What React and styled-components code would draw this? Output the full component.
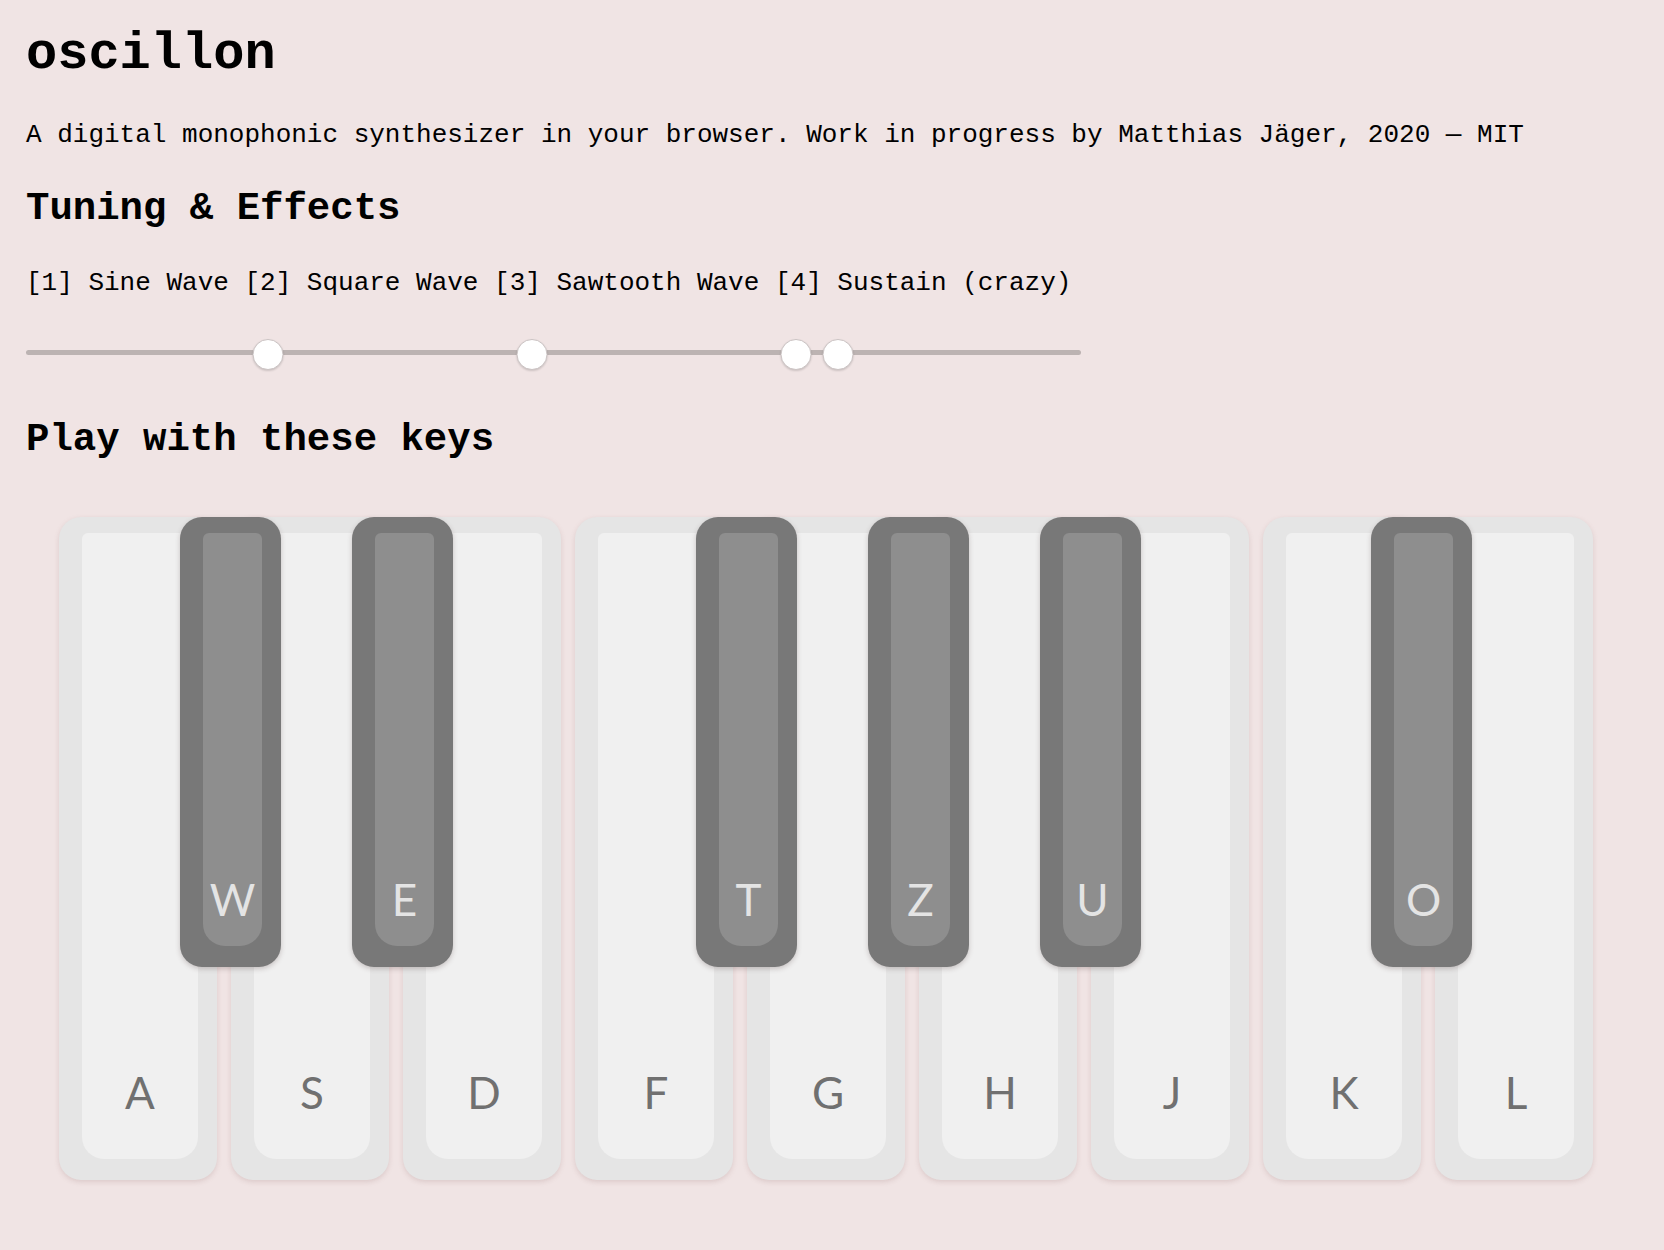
import React from "react";
import styled, { createGlobalStyle } from "styled-components";

const GlobalStyle = createGlobalStyle`
  html, body {
    margin: 0;
    padding: 0;
    background: #f0e4e4;
  }
  body {
    font-family: "Liberation Mono", "Courier New", monospace;
    font-size: 26px;
    color: #000;
  }
`;

const Page = styled.main`
  display: flex;
  flex-direction: column;
  padding: 25px 26px 60px;
`;

const Title = styled.h1`
  margin: 0;
  font-size: 52px;
  line-height: 60px;
  font-weight: bold;
`;

const Intro = styled.p`
  margin: 35px 0 0;
  line-height: 30px;
`;

const Heading = styled.h2`
  margin: ${(p) => p.$gap}px 0 0;
  font-size: 39px;
  line-height: 44px;
  font-weight: bold;
`;

const Modes = styled.p`
  margin: 37px 0 0;
  line-height: 30px;
  white-space: pre;
`;

const Slider = styled.div`
  position: relative;
  margin-top: 41px;
  width: 1055px;
  height: 31px;
  display: flex;
  align-items: center;
`;

const Track = styled.div`
  width: 100%;
  height: 5px;
  margin-top: -4px;
  border-radius: 3px;
  background: #bcb3b2;
`;

const Thumb = styled.span`
  position: absolute;
  top: 0;
  width: 29px;
  height: 29px;
  border-radius: 50%;
  background: #fff;
  border: 1px solid #cbc3c3;
  box-shadow: 0 1px 2px rgba(0, 0, 0, 0.15);
  transform: translateX(-50%);
`;

const Keyboard = styled.div`
  display: flex;
  gap: 14px;
  margin: 55px 0 0 33px;
`;

const WhiteKey = styled.div`
  position: relative;
  width: 158px;
  height: 663px;
  box-sizing: border-box;
  padding: 16px 19px 21px 23px;
  display: flex;
  background: #e5e5e5;
  border-radius: 22px;
  box-shadow: 0 2px 5px rgba(150, 110, 110, 0.22);
`;

const Face = styled.div`
  flex: 1;
  display: flex;
  flex-direction: column;
  justify-content: flex-end;
  align-items: center;
  padding-bottom: ${(p) => p.$pad}px;
  background: ${(p) => p.$bg};
  border-radius: 6px 6px 22px 22px;
`;

const Letter = styled.span`
  font-family: Lato, "Open Sans", sans-serif;
  font-size: 44px;
  line-height: 46px;
  font-weight: 400;
  color: ${(p) => p.$color};
`;

const BlackKey = styled.div`
  position: absolute;
  top: 0;
  z-index: 2;
  width: 101px;
  height: 450px;
  box-sizing: border-box;
  padding: 16px 19px 21px 23px;
  display: flex;
  background: #787878;
  border-radius: 22px;
  box-shadow: 0 2px 5px rgba(80, 60, 60, 0.25);
`;

const thumbs = [22.9, 48, 73, 77];

const keys = [
  { white: "A", black: "W", offset: 121 },
  { white: "S", black: "E", offset: 121 },
  { white: "D" },
  { white: "F", black: "T", offset: 121 },
  { white: "G", black: "Z", offset: 121 },
  { white: "H", black: "U", offset: 121 },
  { white: "J" },
  { white: "K", black: "O", offset: 108 },
  { white: "L" },
];

const App = () => {
  return (
    <Page>
      <GlobalStyle />
      <Title>oscillon</Title>
      <Intro>
        A digital monophonic synthesizer in your browser. Work in progress by
        Matthias Jäger, 2020 — MIT
      </Intro>
      <Heading $gap={37}>Tuning &amp; Effects</Heading>
      <Modes>[1] Sine Wave [2] Square Wave [3] Sawtooth Wave [4] Sustain (crazy)</Modes>
      <Slider>
        <Track />
        {thumbs.map((t) => (
          <Thumb key={t} style={{ left: `${t}%` }} />
        ))}
      </Slider>
      <Heading $gap={48}>Play with these keys</Heading>
      <Keyboard>
        {keys.map((k) => (
          <WhiteKey key={k.white}>
            <Face $bg="#f0f0f0" $pad={44}>
              <Letter $color="#707070">{k.white}</Letter>
            </Face>
            {k.black && (
              <BlackKey style={{ left: k.offset }}>
                <Face $bg="#8e8e8e" $pad={24}>
                  <Letter $color="#e4e4e4">{k.black}</Letter>
                </Face>
              </BlackKey>
            )}
          </WhiteKey>
        ))}
      </Keyboard>
    </Page>
  );
};

export default App;
